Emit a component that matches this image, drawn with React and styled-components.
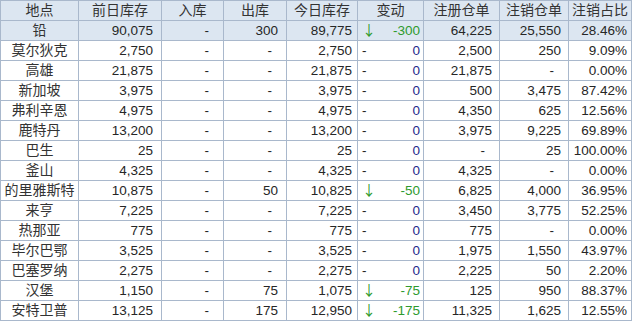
import styled, { createGlobalStyle } from "styled-components";

const GlobalStyle = createGlobalStyle`
  body {
    margin: 0;
    background: #ffffff;
  }
`;

const cols = "78px 83px 62px 63px 71px 66px 76px 69px 63px";
const pads = [0, 8, 14, 8, 5, 3, 7, 7, 4];

const Sheet = styled.div`
  width: 632px;
  border-top: 1px solid #a9b8cc;
  border-left: 1px solid #a9b8cc;
  box-sizing: border-box;
  font-family: "Liberation Sans", "Noto Sans CJK SC", sans-serif;
  font-size: 13.5px;
  color: #262626;
`;

const Row = styled.div`
  display: grid;
  grid-template-columns: ${cols};
  height: 20px;
  background: ${(p) => (p.$shade ? "#dce6f1" : "#ffffff")};
`;

const Cell = styled.div`
  box-sizing: border-box;
  height: 20px;
  border-right: 1px solid #a9b8cc;
  border-bottom: 1px solid #a9b8cc;
  display: flex;
  align-items: center;
  justify-content: ${(p) => (p.$center ? "center" : "flex-end")};
  padding-right: ${(p) => (p.$center ? 0 : p.$pad)}px;
  white-space: nowrap;
  line-height: 1;
`;

const Label = styled.span`
  font-family: "Noto Sans CJK SC", sans-serif;
  font-size: 14px;
  line-height: 14px;
  color: #333333;
  margin-top: -3px;
`;

const ChangeCell = styled(Cell)`
  justify-content: space-between;
  padding-left: 4px;
`;

const Mark = styled.span`
  color: ${(p) => (p.$down ? "#2e9a2e" : "#262626")};
  font-family: ${(p) => (p.$down ? '"Noto Sans CJK SC"' : '"Liberation Sans"')}, sans-serif;
  font-size: ${(p) => (p.$down ? "14px" : "13.5px")};
  margin-top: ${(p) => (p.$down ? "-3px" : "0")};
`;

const Value = styled.span`
  color: ${(p) => (p.$down ? "#2e9a2e" : "#1f2a8c")};
`;

const headers = ["地点", "前日库存", "入库", "出库", "今日库存", "变动", "注册仓单", "注销仓单", "注销占比"];

const rows = [
  ["铅", "90,075", "-", "300", "89,775", "-300", "64,225", "25,550", "28.46%"],
  ["莫尔狄克", "2,750", "-", "-", "2,750", "0", "2,500", "250", "9.09%"],
  ["高雄", "21,875", "-", "-", "21,875", "0", "21,875", "-", "0.00%"],
  ["新加坡", "3,975", "-", "-", "3,975", "0", "500", "3,475", "87.42%"],
  ["弗利辛恩", "4,975", "-", "-", "4,975", "0", "4,350", "625", "12.56%"],
  ["鹿特丹", "13,200", "-", "-", "13,200", "0", "3,975", "9,225", "69.89%"],
  ["巴生", "25", "-", "-", "25", "0", "-", "25", "100.00%"],
  ["釜山", "4,325", "-", "-", "4,325", "0", "4,325", "-", "0.00%"],
  ["的里雅斯特", "10,875", "-", "50", "10,825", "-50", "6,825", "4,000", "36.95%"],
  ["来亨", "7,225", "-", "-", "7,225", "0", "3,450", "3,775", "52.25%"],
  ["热那亚", "775", "-", "-", "775", "0", "775", "-", "0.00%"],
  ["毕尔巴鄂", "3,525", "-", "-", "3,525", "0", "1,975", "1,550", "43.97%"],
  ["巴塞罗纳", "2,275", "-", "-", "2,275", "0", "2,225", "50", "2.20%"],
  ["汉堡", "1,150", "-", "75", "1,075", "-75", "125", "950", "88.37%"],
  ["安特卫普", "13,125", "-", "175", "12,950", "-175", "11,325", "1,625", "12.55%"],
];

function renderCell(v, i) {
  if (i === 0) {
    return (
      <Cell key={i} $center>
        <Label>{v}</Label>
      </Cell>
    );
  }
  if (i === 5) {
    const down = v.startsWith("-");
    return (
      <ChangeCell key={i} $pad={pads[i]}>
        <Mark $down={down}>{down ? "↓" : "-"}</Mark>
        <Value $down={down}>{v}</Value>
      </ChangeCell>
    );
  }
  // dashes in accounting format sit further from the edge
  const pad = v === "-" ? 14 : pads[i];
  return (
    <Cell key={i} $pad={pad}>
      {v}
    </Cell>
  );
}

export default function App() {
  return (
    <>
      <GlobalStyle />
      <Sheet>
        <Row $shade>
          {headers.map((h) => (
            <Cell key={h} $center>
              <Label>{h}</Label>
            </Cell>
          ))}
        </Row>
        {rows.map((r, idx) => (
          <Row key={r[0]} $shade={idx === 0}>
            {r.map(renderCell)}
          </Row>
        ))}
      </Sheet>
    </>
  );
}
